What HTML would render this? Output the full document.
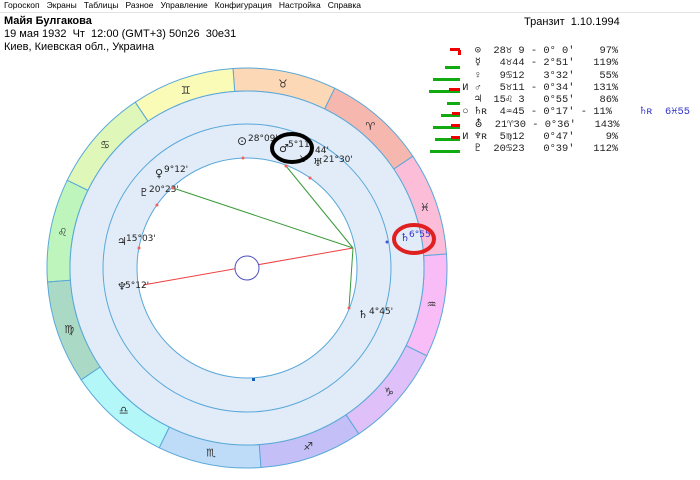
<!DOCTYPE html>
<html><head><meta charset="utf-8"><style>
body{margin:0;width:700px;height:480px;background:#fff;position:relative;overflow:hidden;font-family:"Liberation Sans","DejaVu Sans",sans-serif;}
.menu{position:absolute;left:0;top:0;width:700px;height:12px;border-bottom:1px solid #e4e4e4;font-size:8.5px;color:#000;line-height:11px;}
.menu span{margin-left:4px;margin-right:3px}
.t{position:absolute;color:#000;white-space:nowrap}
pre{margin:0;position:absolute;font-family:"Liberation Mono","DejaVu Sans Mono",monospace;font-size:10.4px;line-height:12.3px;color:#222;}
.bar{position:absolute;height:3px}
</style></head><body>
<div class="menu"><span>Гороскоп</span><span>Экраны</span><span>Таблицы</span><span>Разное</span><span>Управление</span><span>Конфигурация</span><span>Настройка</span><span>Справка</span></div>
<div class="t" style="left:4px;top:15px;font-size:11px;font-weight:bold">Майя Булгакова</div>
<div class="t" style="left:4px;top:28px;font-size:11px">19 мая 1932&nbsp; Чт&nbsp; 12:00 (GMT+3) 50n26&nbsp; 30e31</div>
<div class="t" style="left:4px;top:41px;font-size:11px">Киев, Киевская обл., Украина</div>
<div class="t" style="left:524px;top:16px;font-size:11px">Транзит&nbsp; 1.10.1994</div>
<pre style="left:456px;top:45px">   ⊙  28♉ 9 - 0° 0'    97%
   ☿   4♉44 - 2°51'   119%
   ♀   9♋12   3°32'    55%
 И ♂   5♉11 - 0°34'   131%
   ♃  15♌ 3   0°55'    86%
 ○ ♄ʀ  4♒45 - 0°17' - 11%
   ⛢  21♈30 - 0°36'   143%
 И ♆ʀ  5♍12   0°47'     9%
   ♇  20♋23   0°39'   112%</pre>
<pre style="left:640px;top:106px;color:#3333cc">♄ʀ  6♓55</pre>
<div class="bar" style="left:450px;top:48px;width:10px;background:#e00"></div>
<div class="bar" style="left:458px;top:50px;width:3px;height:5px;background:#e00"></div>
<div class="bar" style="left:445px;top:66px;width:15px;background:#1a1"></div>
<div class="bar" style="left:433px;top:78px;width:27px;background:#1a1"></div>
<div class="bar" style="left:429px;top:90px;width:31px;background:#1a1"></div>
<div class="bar" style="left:449px;top:88px;width:11px;background:#e00"></div>
<div class="bar" style="left:447px;top:102px;width:13px;background:#1a1"></div>
<div class="bar" style="left:441px;top:114px;width:19px;background:#1a1"></div>
<div class="bar" style="left:452px;top:112px;width:8px;background:#e00"></div>
<div class="bar" style="left:433px;top:126px;width:27px;background:#1a1"></div>
<div class="bar" style="left:451px;top:124px;width:9px;background:#e00"></div>
<div class="bar" style="left:435px;top:138px;width:25px;background:#1a1"></div>
<div class="bar" style="left:451px;top:136px;width:9px;background:#e00"></div>
<div class="bar" style="left:430px;top:150px;width:30px;background:#1a1"></div>
<svg style="position:absolute;left:0;top:0" width="700" height="480" viewBox="0 0 700 480">
<g id="z"></g>
<circle cx="247" cy="268" r="177" fill="#e1ecf8" stroke="#5aa8d8" stroke-width="1"/>
<circle cx="247" cy="268" r="144" fill="none" stroke="#5aa8d8" stroke-width="1"/>
<circle cx="247" cy="268" r="110" fill="#fff" stroke="#5aa8d8" stroke-width="1"/>
<line x1="143" y1="285" x2="353" y2="248" stroke="#f04040" stroke-width="1"/>
<line x1="173" y1="188" x2="353" y2="248" stroke="#3a9a3a"/>
<line x1="286" y1="166" x2="353" y2="248" stroke="#3a9a3a"/>
<line x1="349" y1="308" x2="353" y2="248" stroke="#3a9a3a"/>
<circle cx="247" cy="268" r="12" fill="#fff" stroke="#5050c0"/>
<g font-family="DejaVu Sans" font-size="10" fill="#222">
<text x="237" y="145" font-size="12">⊙</text><text x="248" y="141" font-size="9">28°09'</text>
<text x="279" y="152" font-size="11">♂</text><text x="288" y="147" font-size="9">5°11'</text>
<text x="299" y="162" font-size="9">♉</text><text x="315" y="153" font-size="9">44'</text>
<text x="313" y="166" font-size="11">♅</text><text x="323" y="162" font-size="9">21°30'</text>
<text x="155" y="177" font-size="11">♀</text><text x="164" y="172" font-size="9">9°12'</text>
<text x="139" y="196" font-size="11">♇</text><text x="149" y="192" font-size="9">20°23'</text>
<text x="117" y="245" font-size="11">♃</text><text x="126" y="241" font-size="9">15°03'</text>
<text x="117" y="290" font-size="11">♆</text><text x="125" y="288" font-size="9">5°12'</text>
<text x="358" y="318" font-size="11">♄</text><text x="369" y="314" font-size="9">4°45'</text>
<text x="400" y="241" font-size="11" fill="#3333cc">♄</text><text x="409" y="237" font-size="9" fill="#3333cc">6°55</text>
</g>
<g fill="#f06060"><circle cx="243" cy="158" r="1.5"/><circle cx="286" cy="166" r="1.5"/><circle cx="310" cy="178" r="1.5"/><circle cx="173" cy="188" r="1.5"/><circle cx="157" cy="205" r="1.5"/><circle cx="139" cy="248" r="1.5"/><circle cx="349" cy="308" r="1.5"/></g>
<circle cx="387" cy="242" r="1.5" fill="#5050d0"/>
<rect x="252" y="378" width="3" height="3" fill="#1060c0"/>
<ellipse cx="292" cy="148" rx="20" ry="14" fill="none" stroke="#000" stroke-width="4"/>
<ellipse cx="414" cy="239" rx="20" ry="14" fill="none" stroke="#e02020" stroke-width="4"/>
</svg>
<script>
(function(){
var g=document.getElementById('z');var cx=247,cy=268,R=200,r=177;
var cols=['#fbbdd8','#f6b7ae','#fcd8b6','#fbfbb8','#dff7b8','#bdf5bd','#aad9c5','#b3f7f9','#bedcf8','#c4c0f7','#dfc0f8','#f8bcf6'];
var sg=['♓','♈','♉','♊','♋','♌','♍','♎','♏','♐','♑','♒'];
var h='';
for(var i=0;i<12;i++){var a1=(4+30*i)*Math.PI/180,a2=(34+30*i)*Math.PI/180;
function p(rr,a){return (cx+rr*Math.cos(a)).toFixed(1)+','+(cy-rr*Math.sin(a)).toFixed(1);}
h+='<path d="M'+p(R,a1)+' A'+R+','+R+' 0 0 0 '+p(R,a2)+' L'+p(r,a2)+' A'+r+','+r+' 0 0 1 '+p(r,a1)+' Z" fill="'+cols[i]+'" stroke="#5aa8d8" stroke-width="1"/>';
var am=(19+30*i)*Math.PI/180,x=cx+188*Math.cos(am),y=cy-188*Math.sin(am);
h+='<text x="'+x.toFixed(1)+'" y="'+(y+4).toFixed(1)+'" font-family="DejaVu Sans" font-size="11" text-anchor="middle" fill="#333">'+sg[i]+'</text>';}
g.innerHTML=h;})();
</script>
</body></html>
